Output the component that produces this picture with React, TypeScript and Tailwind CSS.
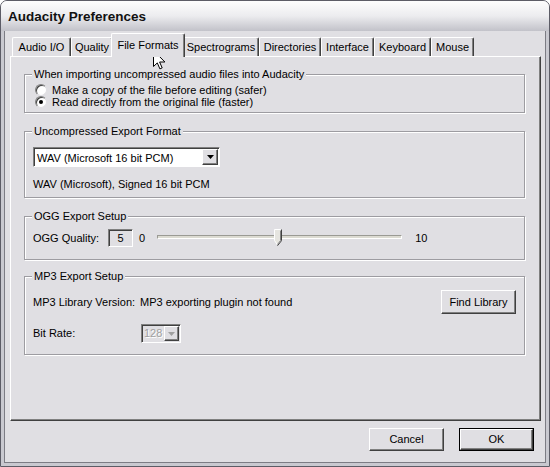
import React from "react";

const raised =
  "border border-t-white border-l-white border-r-[#404040] border-b-[#404040] shadow-[inset_-1px_-1px_0_#808080]";

function Tab({ label, w, selected }: { label: string; w: number; selected?: boolean }) {
  if (selected) {
    return (
      <div
        style={{ width: w }}
        className="h-[24px] -mx-[2px] relative z-10 bg-[#e0dfe3] border-t border-l border-white border-r border-r-[#404040] shadow-[inset_-1px_0_0_#808080] flex items-start justify-center pt-[3px] rounded-t-[2px]"
      >
        {label}
      </div>
    );
  }
  return (
    <div
      style={{ width: w }}
      className="h-[20px] bg-[#e0dfe3] border-t border-l border-white border-r border-r-[#404040] shadow-[inset_-1px_0_0_#808080] flex items-center justify-center rounded-t-[2px]"
    >
      {label}
    </div>
  );
}

function Group({
  title,
  children,
  className,
}: {
  title: string;
  children: React.ReactNode;
  className?: string;
}) {
  return (
    <div
      className={
        "relative border border-[#9d9ca1] shadow-[inset_1px_1px_0_#fff,1px_1px_0_#fff] " + (className || "")
      }
    >
      <div className="absolute left-[7px] -top-[7px] px-[2px] bg-[#e0dfe3] leading-[13px]">{title}</div>
      {children}
    </div>
  );
}

function Radio({ checked, label }: { checked?: boolean; label: string }) {
  return (
    <div className="flex items-center h-[12px] gap-[5px]">
      <div className="w-[12px] h-[12px] rounded-full bg-white border border-t-[#808080] border-l-[#808080] border-r-[#e0dfe3] border-b-[#e0dfe3] flex items-center justify-center shadow-[inset_1px_1px_0_#404040]">
        {checked && <div className="w-[4px] h-[4px] rounded-full bg-black" />}
      </div>
      <span className="leading-[12px]">{label}</span>
    </div>
  );
}

function Arrow({ color = "#000" }: { color?: string }) {
  return (
    <svg width="7" height="4" viewBox="0 0 7 4">
      <path d="M0 0h7L3.5 4z" fill={color} />
    </svg>
  );
}

export default function App() {
  return (
    <div className="w-[550px] h-[467px] relative overflow-hidden bg-[#e0dfe3] font-['Tahoma','Liberation_Sans',sans-serif] text-[11px] text-black flex flex-col rounded-t-[7px] border border-[#5c5c66]">
      <div className="h-[30px] shrink-0 bg-gradient-to-b from-[#fdfdfd] via-[#ececef] to-[#c2c2c9] flex items-center pl-[7px] pt-[3px] font-bold text-[13.5px] text-[#111] font-['Liberation_Sans',sans-serif]">
        Audacity Preferences
      </div>
      <div className="flex-1 flex flex-col border-x-[3px] border-b-[3px] border-[#c9c9d0] shadow-[inset_1px_0_0_#7c7c84,inset_-1px_0_0_#7c7c84,inset_0_-1px_0_#7c7c84]">
        {/* tabs */}
        <div className="pl-[8px] pt-[2px] h-[26px] flex items-end shrink-0">
          <Tab label="Audio I/O" w={59} />
          <Tab label="Quality" w={42} />
          <Tab label="File Formats" w={74} selected />
          <Tab label="Spectrograms" w={76} />
          <Tab label="Directories" w={62} />
          <Tab label="Interface" w={53} />
          <Tab label="Keyboard" w={57} />
          <Tab label="Mouse" w={43} />
        </div>
        {/* panel */}
        <div className="ml-[6px] mr-[5px] h-[365px] -mt-[1px] bg-[#e0dfe3] border border-t-white border-l-white border-r-[#404040] border-b-[#404040] shadow-[inset_-1px_-1px_0_#808080] pt-[17px] pl-[13px] pr-[15px] flex flex-col">
          <Group title="When importing uncompressed audio files into Audacity" className="h-[39px] pl-[10px] pt-[9px] flex flex-col">
            <Radio label="Make a copy of the file before editing (safer)" />
            <Radio checked label="Read directly from the original file (faster)" />
          </Group>

          <Group title="Uncompressed Export Format" className="mt-[18px] h-[67px] pl-[8px] pt-[15px]">
            <div className="w-[187px] h-[20px] bg-white border border-t-[#808080] border-l-[#808080] border-r-white border-b-white shadow-[inset_1px_1px_0_#404040] flex items-center">
              <span className="flex-1 pl-[3px] leading-[14px] pt-[1px]">WAV (Microsoft 16 bit PCM)</span>
              <div className={"w-[16px] h-[16px] mr-[1px] bg-[#e0dfe3] flex items-center justify-center " + raised}>
                <Arrow />
              </div>
            </div>
            <div className="mt-[11px] leading-[13px]">WAV (Microsoft), Signed 16 bit PCM</div>
          </Group>

          <Group title="OGG Export Setup" className="mt-[18px] h-[44px] pl-[8px] pt-[12px] flex items-start">
            <span className="mt-[3px] leading-[13px]">OGG Quality:</span>
            <div className="ml-[9px] w-[25px] h-[18px] border border-t-[#808080] border-l-[#808080] border-r-white border-b-white shadow-[inset_1px_1px_0_#404040] flex items-center justify-center">
              5
            </div>
            <span className="ml-[6px] mt-[3px] leading-[13px]">0</span>
            <div className="relative ml-[12px] w-[245px] h-[18px]">
              <div className="absolute left-0 right-0 top-[6px] h-[4px] border border-t-[#9a9a94] border-l-[#9a9a94] border-r-white border-b-white bg-[#dcdbd2]" />
              <svg className="absolute left-[117px] top-0" width="8" height="17" viewBox="0 0 8 17">
                <path d="M0.5 0.5h6v11l-3 4.5-3-4.5z" fill="#e6e5e0" stroke="#fff" />
                <path d="M7.5 0.5v11.2l-4 5" fill="none" stroke="#404040" />
                <path d="M6.5 1.5v10l-3 4" fill="none" stroke="#808080" />
              </svg>
            </div>
            <span className="ml-[13px] mt-[3px] leading-[13px]">10</span>
          </Group>

          <Group title="MP3 Export Setup" className="mt-[16px] h-[79px] pl-[8px] pr-[8px] pt-[13px] flex flex-col">
            <div className="flex items-center">
              <span className="w-[107px]">MP3 Library Version:</span>
              <span className="flex-1">MP3 exporting plugin not found</span>
              <div className={"w-[75px] h-[24px] flex items-center justify-center bg-[#e0dfe3] " + raised}>Find Library</div>
            </div>
            <div className="flex items-center mt-[10px]">
              <span className="w-[108px]">Bit Rate:</span>
              <div className="w-[40px] h-[19px] bg-[#e0dfe3] border border-t-[#808080] border-l-[#808080] border-r-white border-b-white shadow-[inset_1px_1px_0_#404040] flex items-center">
                <span className="flex-1 pl-[2px] text-[#a0a0a0] [text-shadow:1px_1px_0_#fff]">128</span>
                <div className={"w-[15px] h-[15px] mr-[1px] flex items-center justify-center " + raised}>
                  <Arrow color="#a0a0a0" />
                </div>
              </div>
            </div>
          </Group>
        </div>
        {/* buttons */}
        <div className="flex justify-end gap-[15px] pr-[12px] pt-[7px]">
          <div className={"w-[75px] h-[23px] flex items-center justify-center " + raised}>Cancel</div>
          <div className="w-[75px] h-[23px] border border-black p-0">
            <div className={"w-full h-full flex items-center justify-center " + raised}>OK</div>
          </div>
        </div>
      </div>
      {/* mouse cursor */}
      <svg className="absolute left-[152px] top-[49px]" width="13" height="20" viewBox="0 0 13 20">
        <path d="M0.5 0.5v16l3.8-3.6 2.6 6 2.3-1-2.6-5.9h5.3z" fill="#fff" stroke="#000" strokeLinejoin="miter" />
      </svg>
    </div>
  );
}
